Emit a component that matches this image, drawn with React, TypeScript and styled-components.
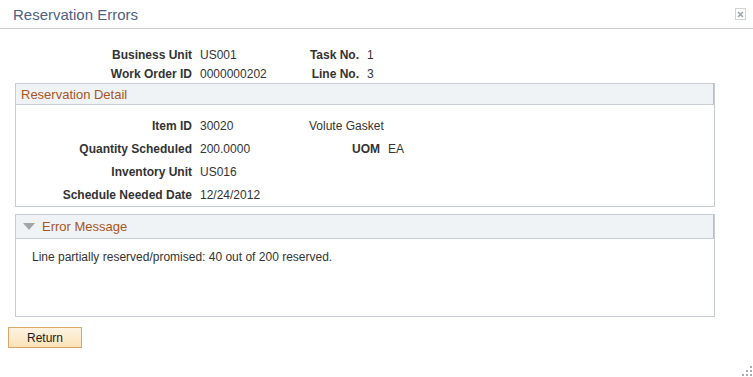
import React from "react";
import styled, { createGlobalStyle } from "styled-components";

const GlobalStyle = createGlobalStyle`
  html, body {
    margin: 0;
    padding: 0;
    background: #ffffff;
  }
  body {
    font-family: "Liberation Sans", Arial, sans-serif;
    font-size: 12px;
    color: #333333;
  }
`;

const Page = styled.div`
  position: relative;
  width: 753px;
  height: 377px;
  overflow: hidden;
`;

const TitleBar = styled.div`
  display: flex;
  justify-content: space-between;
  align-items: flex-start;
  height: 28px;
  border-bottom: 1px solid #c9cdd1;
`;

const Title = styled.h1`
  margin: 0;
  padding: 6px 0 0 13px;
  font-size: 15px;
  font-weight: normal;
  line-height: 18px;
  color: #4f6180;
`;

const CloseButton = styled.button`
  margin: 8px 7px 0 0;
  width: 11px;
  height: 12px;
  padding: 0;
  border: 1px solid #d0d3d6;
  background: #fff;
  display: flex;
  align-items: center;
  justify-content: center;
`;

const Content = styled.div`
  padding-left: 15px;
  width: 700px;
`;

const KeyGrid = styled.div`
  display: grid;
  grid-template-columns: 177px 90px 61px auto;
  column-gap: 8px;
  grid-auto-rows: 19px;
  align-items: center;
  margin-top: 16px;
`;

const Label = styled.span`
  font-weight: bold;
  text-align: right;
  color: #333;
  white-space: nowrap;
`;

const Value = styled.span<{ $span?: number }>`
  color: #333;
  white-space: nowrap;
  grid-column: ${(p) => (p.$span ? `span ${p.$span}` : "auto")};
`;

const Section = styled.section<{ $gap?: number }>`
  margin-top: ${(p) => p.$gap || 0}px;
  border: 1px solid #c6ccd2;
`;

const SectionHeader = styled.div<{ $height: number }>`
  display: flex;
  align-items: center;
  gap: 7px;
  height: ${(p) => p.$height}px;
  padding-left: 5px;
  background: #eff3f5;
  border-bottom: 1px solid #c6ccd2;
  border-right: 1px solid #b7bec5;
  font-size: 13px;
  color: #a8561d;
`;

const DetailGrid = styled.div`
  display: grid;
  grid-template-columns: 176px 101px 71px auto;
  column-gap: 8px;
  grid-auto-rows: 23px;
  align-items: center;
  padding-top: 9px;
`;

const Spacer = styled.span``;

const MessageBody = styled.div`
  height: 77px;
  box-sizing: border-box;
  padding: 11px 0 0 16px;
  line-height: 14px;
`;

const Footer = styled.div`
  padding: 10px 0 0 8px;
`;

const ReturnButton = styled.button`
  width: 74px;
  height: 21px;
  padding: 0;
  border: 1px solid #dba56a;
  background: linear-gradient(#fdf3e2, #fbe2b6);
  font-family: "Liberation Sans", Arial, sans-serif;
  font-size: 12px;
  color: #1a1a1a;
`;

const Grip = styled.div`
  position: absolute;
  right: 1px;
  bottom: 2px;
  width: 10px;
  height: 10px;
`;

const CloseIcon = () => (
  <svg width="7" height="7" viewBox="0 0 7 7">
    <path d="M1 1L6 6M6 1L1 6" stroke="#9aa6b2" strokeWidth="1.6" />
  </svg>
);

const Arrow = () => (
  <svg width="12" height="7" viewBox="0 0 12 7" style={{ marginLeft: 2 }}>
    <path d="M0 0H12L6 7Z" fill="#a3a6a9" />
  </svg>
);

const GripIcon = () => (
  <svg width="10" height="10" viewBox="0 0 10 10">
    {[
      [8, 0],
      [8, 4],
      [4, 4],
      [8, 8],
      [4, 8],
      [0, 8],
    ].map(([x, y]) => (
      <rect key={`${x}-${y}`} x={x} y={y} width="2" height="2" fill="#a8acb0" />
    ))}
  </svg>
);

export default function App() {
  return (
    <Page>
      <GlobalStyle />
      <TitleBar>
        <Title>Reservation Errors</Title>
        <CloseButton aria-label="Close">
          <CloseIcon />
        </CloseButton>
      </TitleBar>

      <Content>
        <KeyGrid>
          <Label>Business Unit</Label>
          <Value>US001</Value>
          <Label>Task No.</Label>
          <Value>1</Value>
          <Label>Work Order ID</Label>
          <Value>0000000202</Value>
          <Label>Line No.</Label>
          <Value>3</Value>
        </KeyGrid>

        <Section>
          <SectionHeader $height={20}>Reservation Detail</SectionHeader>
          <DetailGrid>
            <Label>Item ID</Label>
            <Value>30020</Value>
            <Value $span={2}>Volute Gasket</Value>
            <Label>Quantity Scheduled</Label>
            <Value>200.0000</Value>
            <Label>UOM</Label>
            <Value>EA</Value>
            <Label>Inventory Unit</Label>
            <Value>US016</Value>
            <Spacer />
            <Spacer />
            <Label>Schedule Needed Date</Label>
            <Value>12/24/2012</Value>
          </DetailGrid>
        </Section>

        <Section $gap={7}>
          <SectionHeader $height={23}>
            <Arrow />
            Error Message
          </SectionHeader>
          <MessageBody>Line partially reserved/promised: 40 out of 200 reserved.</MessageBody>
        </Section>
      </Content>

      <Footer>
        <ReturnButton>Return</ReturnButton>
      </Footer>

      <Grip>
        <GripIcon />
      </Grip>
    </Page>
  );
}
